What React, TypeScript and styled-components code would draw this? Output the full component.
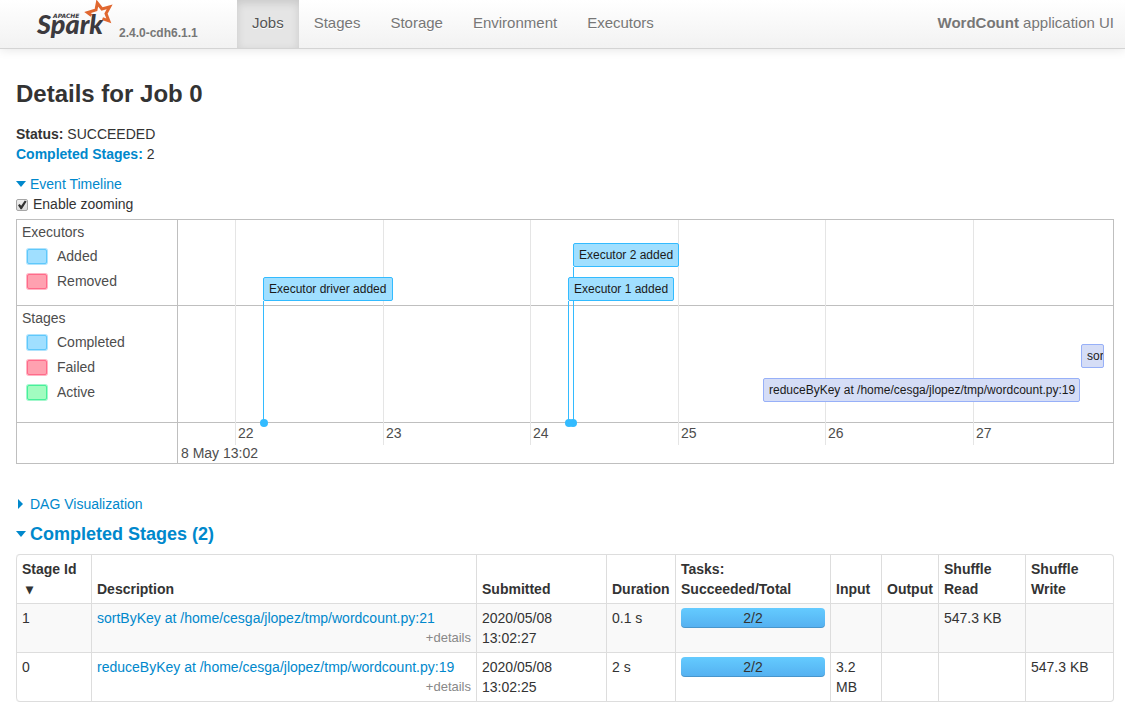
import React, { useState } from "react";
import styled, { createGlobalStyle } from "styled-components";

const GlobalStyle = createGlobalStyle`
  *, *::before, *::after { box-sizing: border-box; }
  body {
    margin: 0;
    background: #fff;
    color: #333;
    font: 14px/20px "Liberation Sans", Arial, sans-serif;
  }
`;

const Navbar = styled.header`
  display: flex;
  height: 49px;
  padding-right: 11px;
  border-bottom: 1px solid #d4d4d4;
  background: linear-gradient(#fff, #f2f2f2);
  box-shadow: 0 1px 10px rgba(0, 0, 0, 0.1);
`;

const Brand = styled.a`
  display: flex;
  flex: 0 0 237px;
  padding-left: 36px;
  color: #777;
  text-decoration: none;
`;

const Version = styled.span`
  margin: 23px 0 0 5px;
  font-size: 12px;
  font-weight: bold;
`;

const NavLinks = styled.nav`
  display: flex;
  flex: 1;
`;

const NavLink = styled.a<{ $active?: boolean }>`
  padding: 13px 15px 15px;
  font-size: 15px;
  color: ${(p) => (p.$active ? "#555" : "#777")};
  background: ${(p) => (p.$active ? "#e5e5e5" : "transparent")};
  box-shadow: ${(p) => (p.$active ? "inset 0 3px 8px rgba(0, 0, 0, 0.125)" : "none")};
  text-shadow: 0 1px 0 #fff;
  text-decoration: none;
`;

const AppName = styled.p`
  margin: 0;
  padding-top: 13px;
  font-size: 15px;
  color: #777;
  text-shadow: 0 1px 0 #fff;
`;

const Main = styled.main`
  padding: 25px 11px 18px 16px;
`;

const Title = styled.h1`
  margin: 0 0 10px;
  font-size: 24px;
  line-height: 40px;
`;

const Summary = styled.ul`
  margin: 0 0 10px;
  padding: 0;
  list-style: none;
`;

const SummaryLink = styled.a`
  color: #0088cc;
  font-weight: bold;
  text-decoration: none;
`;

const Toggle = styled.button`
  display: flex;
  align-items: center;
  gap: 4px;
  padding: 0;
  border: 0;
  background: none;
  color: #0088cc;
  font: inherit;
  cursor: pointer;
`;

const Caret = styled.span<{ $open: boolean }>`
  width: 10px;
  height: ${(p) => (p.$open ? "6px" : "10px")};
  &::before {
    content: "";
    display: block;
    width: ${(p) => (p.$open ? "10px" : "5px")};
    height: 100%;
    margin-left: ${(p) => (p.$open ? "0" : "2px")};
    background: currentColor;
    clip-path: ${(p) =>
      p.$open ? "polygon(0 0, 100% 0, 50% 100%)" : "polygon(0 0, 100% 50%, 0 100%)"};
  }
`;

const ZoomLabel = styled.label`
  display: flex;
  align-items: center;
  gap: 5px;
  margin-bottom: 5px;
`;

const Checkbox = styled.input`
  appearance: none;
  width: 12px;
  height: 12px;
  margin: 2px 0 0;
  border: 1px solid #a6a6a6;
  border-radius: 2px;
  background: linear-gradient(#eee, #dcdcdc);
  &:checked::before {
    content: "";
    display: block;
    width: 10px;
    height: 10px;
    background: #333;
    clip-path: polygon(10% 52%, 26% 40%, 42% 58%, 78% 4%, 96% 16%, 48% 92%, 36% 92%);
  }
`;

const Timeline = styled.section`
  display: grid;
  grid-template-columns: 161px 1fr;
  margin-bottom: 30px;
  border: 1px solid #bfbfbf;
  color: #4d4d4d;
`;

const GroupLabels = styled.div`
  border-right: 1px solid #bfbfbf;
`;

const Group = styled.div<{ $height: number }>`
  height: ${(p) => p.$height}px;
  padding: 2px 5px;
  border-bottom: 1px solid #bfbfbf;
`;

const GroupTitle = styled.div`
  margin-bottom: 2px;
`;

const LegendRow = styled.div`
  display: flex;
  align-items: center;
  gap: 10px;
  height: 25px;
  padding: 0 0 1px 5px;
`;

const Swatch = styled.span<{ $fill: string; $line: string }>`
  width: 20px;
  height: 15px;
  border: 1px solid ${(p) => p.$line};
  border-radius: 2px;
  background: ${(p) => p.$fill};
  box-shadow: 0 0 0 1px ${(p) => p.$line}80;
`;

const Plot = styled.div`
  position: relative;
  overflow: hidden;
`;

const Band = styled.div<{ $height: number }>`
  height: ${(p) => p.$height}px;
  border-bottom: 1px solid #bfbfbf;
`;

const Axis = styled.div`
  height: 40px;
  padding: 20px 3px 0;
`;

const Tick = styled.div<{ $x: number }>`
  position: absolute;
  top: 0;
  left: ${(p) => p.$x}px;
  height: 225px;
  padding: 203px 0 0 2px;
  border-left: 1px solid #e5e5e5;
  line-height: 20px;
`;

const Stem = styled.div<{ $x: number; $y: number }>`
  position: absolute;
  top: ${(p) => p.$y}px;
  left: ${(p) => p.$x}px;
  width: 1px;
  height: ${(p) => 203 - p.$y}px;
  background: #33bbff;
`;

const Dot = styled.div<{ $x: number }>`
  position: absolute;
  top: 199px;
  left: ${(p) => p.$x - 4}px;
  width: 8px;
  height: 8px;
  border-radius: 4px;
  background: #33bbff;
`;

const EventBox = styled.div<{ $x: number; $y: number; $width: number; $stage?: boolean }>`
  position: absolute;
  top: ${(p) => p.$y}px;
  left: ${(p) => p.$x}px;
  width: ${(p) => p.$width}px;
  height: 24px;
  padding: 0 5px;
  overflow: hidden;
  border: 1px solid ${(p) => (p.$stage ? "#97b0f8" : "#33bbff")};
  border-radius: 2px;
  background: ${(p) => (p.$stage ? "#d5ddf6" : "#a0dfff")};
  color: #1a1a1a;
  font-size: 12px;
  line-height: 22px;
  white-space: nowrap;
`;

const TableHeading = styled.h2`
  margin: 10px 0;
  font-size: 18px;
  line-height: 20px;
`;

const Table = styled.table`
  width: 100%;
  table-layout: fixed;
  border: 1px solid #ddd;
  border-left: 0;
  border-radius: 4px;
  border-collapse: separate;
  border-spacing: 0;
`;

const Col = styled.col<{ $width?: number }>`
  width: ${(p) => (p.$width ? `${p.$width}px` : "auto")};
`;

const Th = styled.th`
  padding: 4px 5px;
  border-left: 1px solid #ddd;
  text-align: left;
  vertical-align: bottom;
  &:first-child { border-top-left-radius: 4px; }
`;

const Row = styled.tr`
  &:nth-child(odd) { background: #f9f9f9; }
  &:last-child td:first-child { border-bottom-left-radius: 4px; }
`;

const Td = styled.td`
  padding: 4px 5px;
  border-top: 1px solid #ddd;
  border-left: 1px solid #ddd;
  vertical-align: top;
`;

const StageLink = styled.a`
  color: #0088cc;
  text-decoration: none;
`;

const Details = styled.button`
  display: block;
  margin-left: auto;
  padding: 0;
  border: 0;
  background: none;
  color: #888;
  font: inherit;
  font-size: 13px;
  line-height: 20px;
  cursor: pointer;
`;

const Progress = styled.div`
  height: 20px;
  border-radius: 4px;
  background: linear-gradient(#64cbff, #54b0f0);
  box-shadow: inset 0 -1px 0 rgba(0, 0, 0, 0.15);
  text-align: center;
`;

const SortArrow = styled.span`
  padding-left: 4px;
`;

const Logo = () => (
  <svg width="78" height="42" viewBox="0 0 78 42" role="img" aria-label="Apache Spark">
    <text x="1" y="34" fontFamily="Lato, sans-serif" fontWeight="900" fontStyle="italic" fontSize="27" fill="#3c3a3e">
      Spark
    </text>
    <path
      d="M55.5 15.5 L51.5 12.6 L60 9.8 L61.3 3 L66 9 L73.6 6.9 L70 13.5 L72.8 20.8 L66.5 18.7"
      fill="none"
      stroke="#e0672f"
      strokeWidth="3"
    />
    <text
      x="17"
      y="18"
      fontFamily="DejaVu Sans, sans-serif"
      fontWeight="bold"
      fontStyle="italic"
      fontSize="6"
      fill="#3c3a3e"
    >
      APACHE
    </text>
  </svg>
);

type Mark = { label: string; x: number; y: number; width: number; dot?: number };

const tabs = ["Jobs", "Stages", "Storage", "Environment", "Executors"];

const legend = [
  {
    title: "Executors",
    height: 86,
    rows: [
      { label: "Added", fill: "#a0dfff", line: "#5fc8fb" },
      { label: "Removed", fill: "#ffa1b0", line: "#ff6b8a" },
    ],
  },
  {
    title: "Stages",
    height: 117,
    rows: [
      { label: "Completed", fill: "#a0dfff", line: "#5fc8fb" },
      { label: "Failed", fill: "#ffa1b0", line: "#ff6b8a" },
      { label: "Active", fill: "#a2fcc0", line: "#47f09a" },
    ],
  },
];

const ticks = [
  { label: "22", x: 57 },
  { label: "23", x: 205 },
  { label: "24", x: 352 },
  { label: "25", x: 500 },
  { label: "26", x: 647 },
  { label: "27", x: 795 },
];

const executorEvents: Mark[] = [
  { label: "Executor driver added", x: 85, y: 57, width: 130, dot: 86 },
  { label: "Executor 2 added", x: 395, y: 23, width: 106, dot: 395 },
  { label: "Executor 1 added", x: 390, y: 57, width: 106, dot: 391 },
];

const stageEvents: Mark[] = [
  { label: "reduceByKey at /home/cesga/jlopez/tmp/wordcount.py:19", x: 585, y: 158, width: 317 },
  { label: "sortByKey", x: 903, y: 124, width: 23 },
];

const columnWidths = [75, undefined, 130, 69, 155, 51, 57, 87, 88];

const stages = [
  {
    id: 1,
    name: "sortByKey at /home/cesga/jlopez/tmp/wordcount.py:21",
    submitted: "2020/05/08 13:02:27",
    duration: "0.1 s",
    tasks: "2/2",
    input: "",
    output: "",
    read: "547.3 KB",
    write: "",
  },
  {
    id: 0,
    name: "reduceByKey at /home/cesga/jlopez/tmp/wordcount.py:19",
    submitted: "2020/05/08 13:02:25",
    duration: "2 s",
    tasks: "2/2",
    input: "3.2 MB",
    output: "",
    read: "",
    write: "547.3 KB",
  },
];

function EventTimeline() {
  return (
    <Timeline aria-label="Event timeline">
      <GroupLabels>
        {legend.map((group) => (
          <Group key={group.title} $height={group.height}>
            <GroupTitle>{group.title}</GroupTitle>
            {group.rows.map((row) => (
              <LegendRow key={row.label}>
                <Swatch $fill={row.fill} $line={row.line} />
                {row.label}
              </LegendRow>
            ))}
          </Group>
        ))}
      </GroupLabels>
      <Plot>
        {ticks.map((tick) => (
          <Tick key={tick.label} $x={tick.x}>{tick.label}</Tick>
        ))}
        {executorEvents.map((e) => (
          <Stem key={e.label} $x={e.x} $y={e.y + 24} />
        ))}
        {legend.map((group) => (
          <Band key={group.title} $height={group.height} />
        ))}
        <Axis>8 May 13:02</Axis>
        {executorEvents.map((e) => (
          <Dot key={e.label} $x={e.dot ?? e.x} />
        ))}
        {executorEvents.map((e) => (
          <EventBox key={e.label} $x={e.x} $y={e.y} $width={e.width}>{e.label}</EventBox>
        ))}
        {stageEvents.map((e) => (
          <EventBox key={e.label} $x={e.x} $y={e.y} $width={e.width} $stage>{e.label}</EventBox>
        ))}
      </Plot>
    </Timeline>
  );
}

function StageTable() {
  return (
    <Table>
      <colgroup>
        {columnWidths.map((width, i) => (
          <Col key={i} $width={width} />
        ))}
      </colgroup>
      <thead>
        <tr>
          <Th>Stage Id <SortArrow>▾</SortArrow></Th>
          <Th>Description</Th>
          <Th>Submitted</Th>
          <Th>Duration</Th>
          <Th>Tasks: Succeeded/Total</Th>
          <Th>Input</Th>
          <Th>Output</Th>
          <Th>Shuffle Read</Th>
          <Th>Shuffle Write</Th>
        </tr>
      </thead>
      <tbody>
        {stages.map((s) => (
          <Row key={s.id}>
            <Td>{s.id}</Td>
            <Td>
              <StageLink href="#stage">{s.name}</StageLink>
              <Details type="button">+details</Details>
            </Td>
            <Td>{s.submitted}</Td>
            <Td>{s.duration}</Td>
            <Td><Progress>{s.tasks}</Progress></Td>
            <Td>{s.input}</Td>
            <Td>{s.output}</Td>
            <Td>{s.read}</Td>
            <Td>{s.write}</Td>
          </Row>
        ))}
      </tbody>
    </Table>
  );
}

export default function App() {
  const [timelineOpen, setTimelineOpen] = useState(true);
  const [stagesOpen, setStagesOpen] = useState(true);

  return (
    <>
      <GlobalStyle />
      <Navbar>
        <Brand href="#home">
          <Logo />
          <Version>2.4.0-cdh6.1.1</Version>
        </Brand>
        <NavLinks>
          {tabs.map((tab) => (
            <NavLink key={tab} href={`#${tab.toLowerCase()}`} $active={tab === "Jobs"}>{tab}</NavLink>
          ))}
        </NavLinks>
        <AppName><strong>WordCount</strong> application UI</AppName>
      </Navbar>
      <Main>
        <Title>Details for Job 0</Title>
        <Summary>
          <li><strong>Status:</strong> SUCCEEDED</li>
          <li><SummaryLink href="#completed">Completed Stages:</SummaryLink> 2</li>
        </Summary>
        <Toggle type="button" aria-expanded={timelineOpen} onClick={() => setTimelineOpen(!timelineOpen)}>
          <Caret $open={timelineOpen} />
          Event Timeline
        </Toggle>
        {timelineOpen && (
          <>
            <ZoomLabel>
              <Checkbox type="checkbox" defaultChecked />
              Enable zooming
            </ZoomLabel>
            <EventTimeline />
          </>
        )}
        <Toggle type="button" aria-expanded={false}>
          <Caret $open={false} />
          DAG Visualization
        </Toggle>
        <TableHeading id="completed">
          <Toggle type="button" aria-expanded={stagesOpen} onClick={() => setStagesOpen(!stagesOpen)}>
            <Caret $open={stagesOpen} />
            Completed Stages (2)
          </Toggle>
        </TableHeading>
        {stagesOpen && <StageTable />}
      </Main>
    </>
  );
}
